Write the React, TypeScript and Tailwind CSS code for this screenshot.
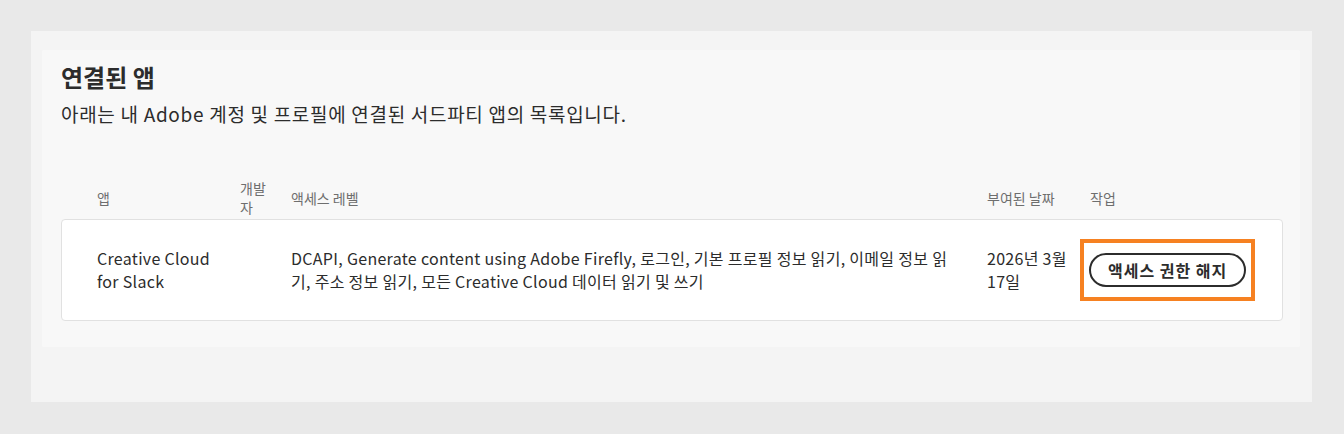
import React from 'react';

const FONT = { fontFamily: '"Noto Sans CJK KR", "Noto Sans", sans-serif' };

const GRID = 'grid grid-cols-[143px_51px_696px_103px_1fr] items-center';

const ConnectedApps: React.FC = () => {
  return (
    <div className="rounded-[2px] bg-[#f8f8f8] pl-[19px] pr-[17px] pt-[11px] pb-[26px]">
      {/* Title */}
      <h1 className="text-[24px] font-bold leading-[32px] text-[#2c2c2c]">연결된 앱</h1>
      <p className="mt-[9px] text-[19px] leading-[24px] tracking-[0.7px] text-[#2c2c2c]">
        아래는 내 Adobe 계정 및 프로필에 연결된 서드파티 앱의 목록입니다.
      </p>

      {/* Table header */}
      <div className={`${GRID} mt-[53px] pl-[36px] pb-[2px] text-[14px] leading-[19px] text-[#6e6e6e]`}>
        <div>앱</div>
        <div className="pr-[16px]">개발자</div>
        <div>액세스 레벨</div>
        <div>부여된 날짜</div>
        <div>작업</div>
      </div>

      {/* Row */}
      <div className="rounded-[4px] border border-[#e1e1e1] bg-white">
        <div className={`${GRID} h-[100px] pl-[35px] text-[16px] leading-[23px] tracking-[0.3px] text-[#2c2c2c]`}>
          <div className="pr-[26px]">Creative Cloud for Slack</div>
          <div />
          <div className="pr-[34px]">
            DCAPI, Generate content using Adobe Firefly, 로그인, 기본 프로필 정보 읽기, 이메일 정보 읽기, 주소 정보 읽기, 모든 Creative Cloud 데이터 읽기 및 쓰기
          </div>
          <div className="pr-3">2026년 3월 17일</div>
          <div>
            <div className="-ml-[10px] inline-block border-4 border-[#f68121] px-[5px] py-[10px]">
              <button
                type="button"
                className="h-[34px] whitespace-nowrap rounded-full border-2 border-[#2c2c2c] bg-white px-[17px] text-[16px] font-bold tracking-[1px] text-[#2c2c2c]"
              >
                액세스 권한 해지
              </button>
            </div>
          </div>
        </div>
      </div>
    </div>
  );
};

export default function App() {
  return (
    <div style={FONT} className="min-h-[434px] bg-[#e9e9e9] pt-[31px] pl-[31px] pr-[32px] pb-[32px]">
      <div className="bg-[#f4f4f4] pl-[11px] pr-[12px] pt-[19px] pb-[55px]">
        <ConnectedApps />
      </div>
    </div>
  );
}
